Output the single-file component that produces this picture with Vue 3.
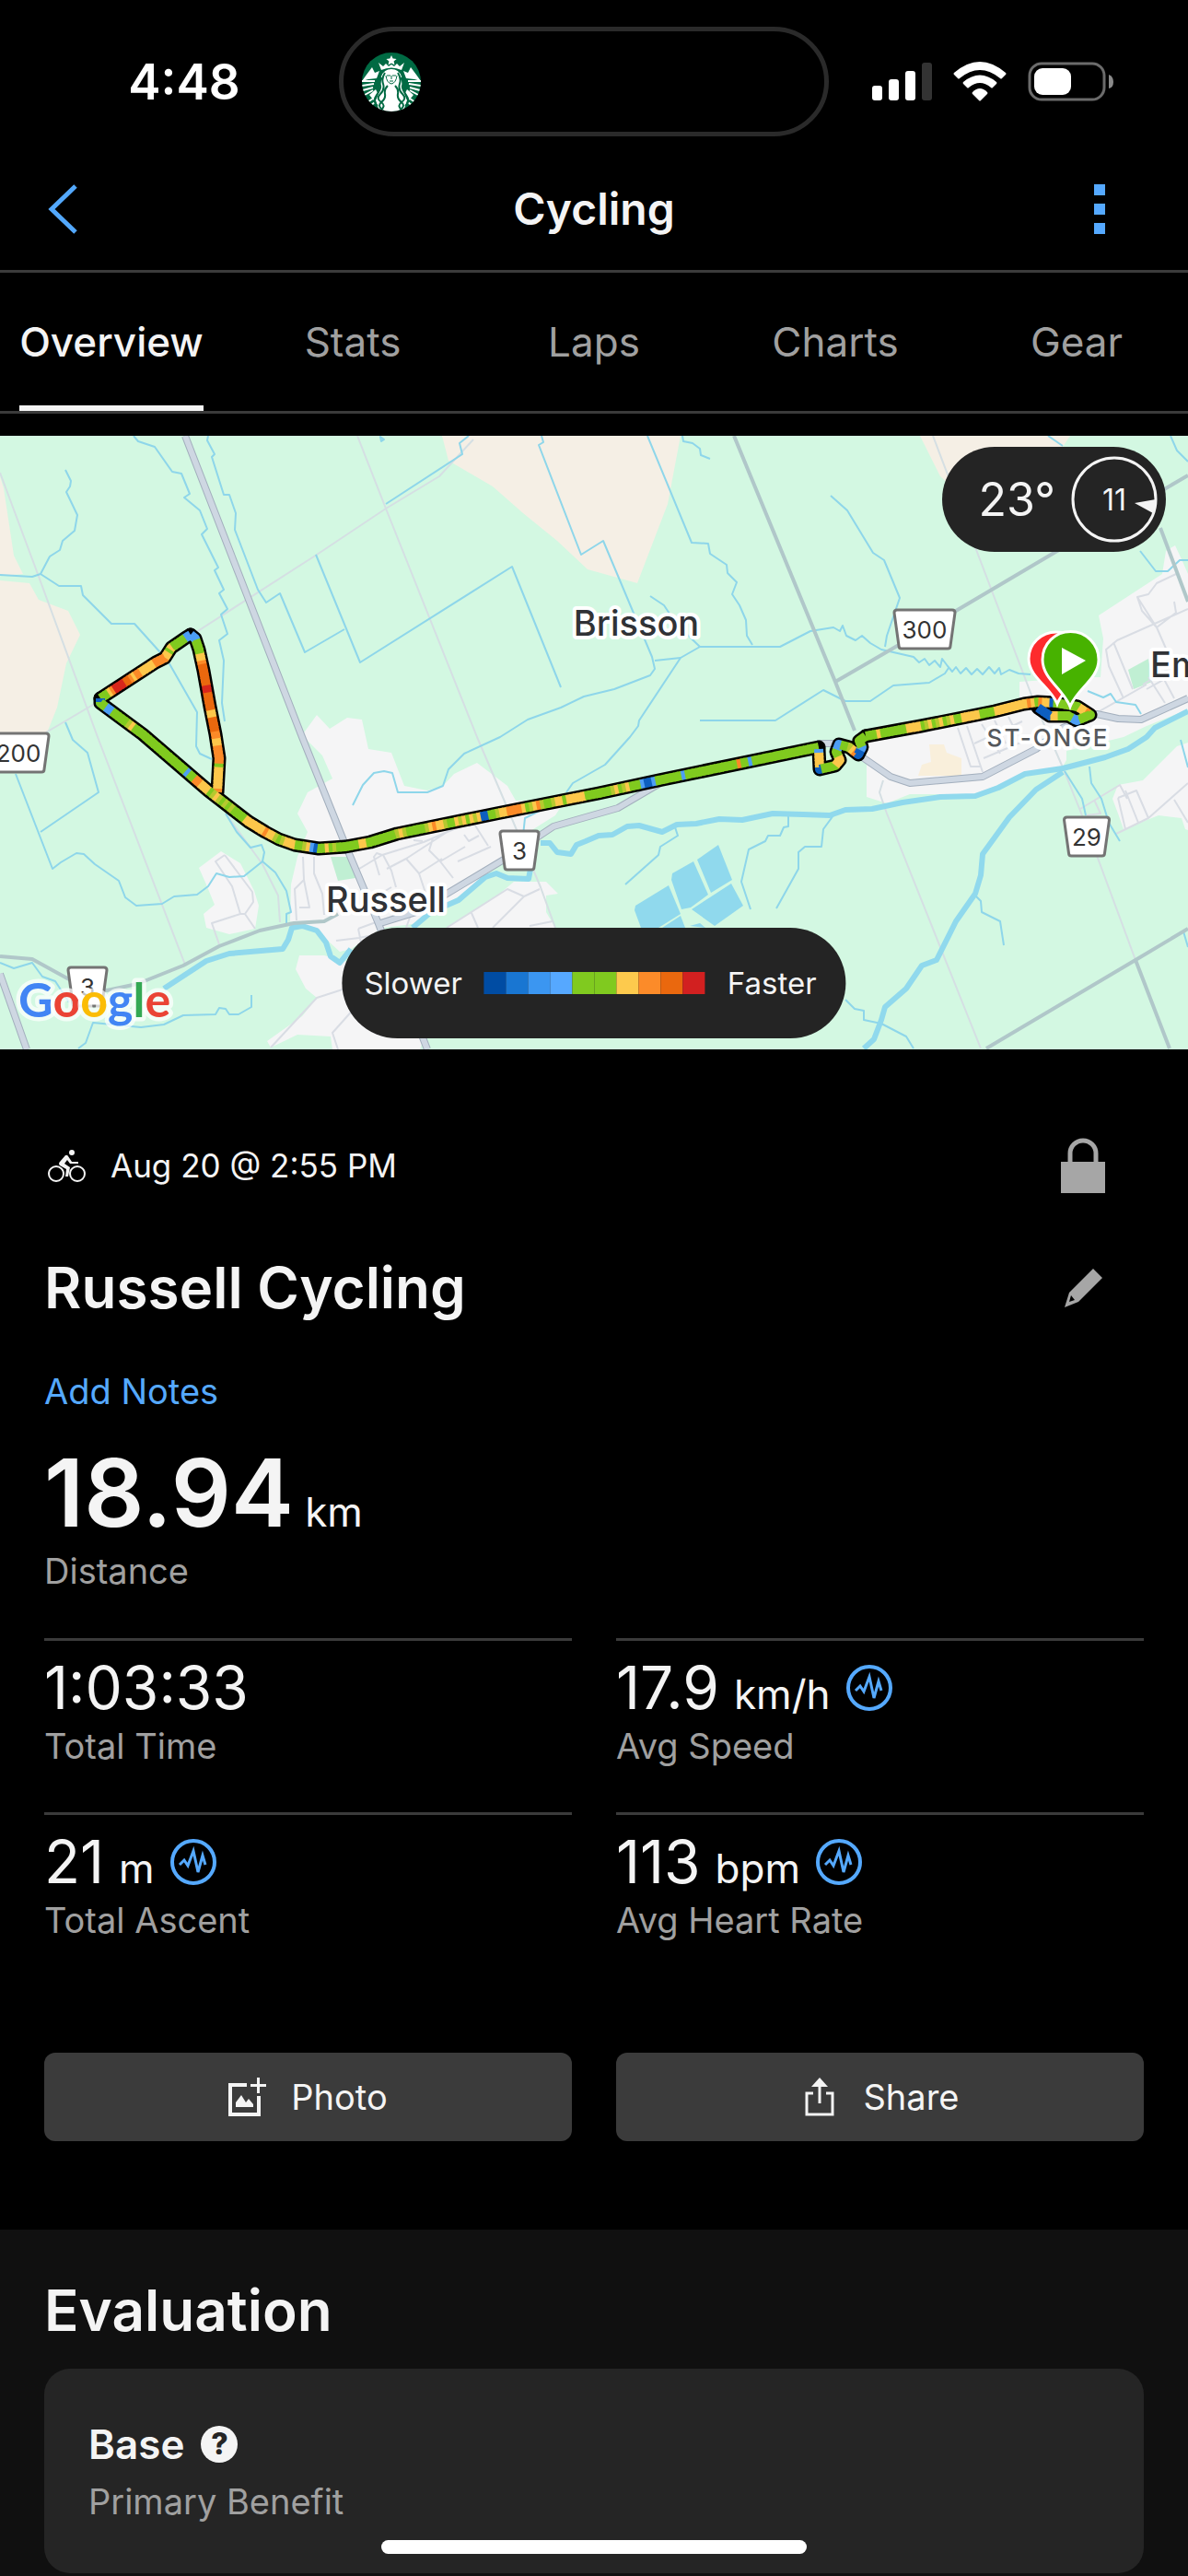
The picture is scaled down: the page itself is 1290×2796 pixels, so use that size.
<template>
  <div class="app">
    <div class="status-bar">
      <div class="clock">4:48</div>
      <div class="island">
        <svg class="siren" viewBox="0 0 64 64" aria-hidden="true">
          <clipPath id="disc"><circle cx="32" cy="32" r="32" /></clipPath>
          <g clip-path="url(#disc)">
            <rect width="64" height="64" fill="#006a43" />
            <g fill="#fff">
              <path d="M32 3l1.600 3.600 4 .4-3 2.600.9 3.900-3.500-2-3.500 2 .9-3.900-3-2.600 4-.4z" />
              <path d="M18 11l5 4 3-3 3 3 3-2 3 2 3-3 3 3 5-4-3 8q-11-5-22 0z" />
              <path d="M32 18q8 0 11 8 2 8 1 14l5 12-4 12H19l-4-12 5-12q-1-6 1-14 3-8 11-8z" />
              <path d="M11 16l3 6 5-2-3 8-9 1-7 2 5-7zM53 16l-3 6-5-2 3 8 9 1 7 2-5-7z" />
              <path d="M8 46l7-6 2 4-4 8zM56 46l-7-6-2 4 4 8z" />
            </g>
            <g fill="none" stroke="#fff" stroke-width="2">
              <path d="M0 31l14 0M0 36l13-2M1 41l11-3M3 46l9-5M64 31l-14 0M64 36l-13-2M63 41l-11-3M61 46l-9-5" />
              <path d="M6 54l6-4M9 58l5-4M58 54l-6-4M55 58l-5-4" />
            </g>
            <g fill="none" stroke="#006a43" stroke-width="2">
              <path d="M25 22q-4 6-2 12t-3 11 1 9-2 10M28 36q-4 4-3 9t-4 9 3 10M21 27q-2 6-1 9t-4 10 1 12" />
              <path d="M39 22q4 6 2 12t3 11-1 9 2 10M36 36q4 4 3 9t4 9-3 10M43 27q2 6 1 9t4 10-1 12" />
              <path d="M26 25q1 8 6 9 5-1 6-9" stroke-width="1" />
              <path d="M27 25h4M33 25h4M32 25v4M30 31h4" stroke-width="1" />
            </g>
          </g>
        </svg>
      </div>
      <div class="status-icons">
        <svg width="65" height="42" viewBox="0 0 65 42" aria-label="Signal">
          <rect x="0" y="25" width="11" height="16" rx="3" fill="#fff" />
          <rect x="18" y="18" width="11" height="23" rx="3" fill="#fff" />
          <rect x="36" y="9" width="11" height="32" rx="3" fill="#fff" />
          <rect x="54" y="0" width="11" height="41" rx="3" fill="#333" />
        </svg>
        <svg width="58" height="43" viewBox="0 0 58 43" fill="#fff" aria-label="Wi-Fi">
          <path d="M1 12Q29 -12 57 12Q58 13 57 14L53 18Q52 19 51 18Q29 0 7 18Q6 19 5 18L1 14Q0 13 1 12z" />
          <path d="M11 22Q29 7 47 22Q48 23 47 24L43 28Q42 29 41 28Q29 18 17 28Q16 29 15 28L11 24Q10 23 11 22z" />
          <path d="M21 33Q29 25 37 33Q38 34 37 35L30 42Q29 43 28 42L21 35Q20 34 21 33z" />
        </svg>
        <svg width="93" height="43" viewBox="0 0 93 43" aria-label="Battery">
          <rect x="2" y="2" width="81" height="39" rx="13" fill="none" stroke="#6b6b6b" stroke-width="3" />
          <rect x="7" y="7" width="40" height="29" rx="9" fill="#fff" />
          <path d="M88 14q5 2 5 8t-5 7z" fill="#8a8a8a" />
        </svg>
      </div>
    </div>

    <header class="header">
      <button class="icon-button" aria-label="Back">
        <svg width="32" height="54" viewBox="0 0 32 54" fill="none" stroke="#53a8fc" stroke-width="5">
          <path d="M30 2L4 27L30 52" />
        </svg>
      </button>
      <h1>Cycling</h1>
      <button class="icon-button menu" aria-label="More">
        <svg width="12" height="54" viewBox="0 0 12 54" fill="#55a9ff">
          <path d="M0 0h12v12H0zM0 21h12v12H0zM0 42h12v12H0z" />
        </svg>
      </button>
    </header>

    <nav class="tabs">
      <button v-for="tab in tabs" :key="tab" :class="{ active: tab === activeTab }" @click="activeTab = tab">
        <span>{{ tab }}</span>
      </button>
    </nav>

    <section class="map">
      <svg class="map-canvas" viewBox="0 0 1290 666">
        <rect width="1290" height="666" fill="#d3f8e2" />
        <path v-for="(d, i) in fields" :key="'f' + i" :d="d" fill="#f5efe5" />
        <path v-for="(d, i) in towns" :key="'t' + i" :d="d" fill="#f5f5f6" />
        <path v-for="(d, i) in parks" :key="'p' + i" :d="d" fill="#c0efd3" />
        <path d="M1009 335L1025 335 1028 344 1044 350 1044 369 997 369 1001 357 1011 354z" fill="#f9efdb" />
        <g fill="none" stroke-linejoin="round">
          <path v-for="(d, i) in lanes" :key="'l' + i" :d="d" stroke="#d5dfe3" stroke-width="2" />
          <path v-for="(d, i) in streets" :key="'s' + i" :d="d" stroke="#d9dde4" stroke-width="2" />
          <path v-for="(d, i) in streams" :key="'w' + i" :d="d" stroke="#8ed6ea" stroke-width="2" />
          <path v-for="(d, i) in rivers" :key="'r' + i" :d="d" stroke="#90d9ed" stroke-width="6" />
          <path v-for="(d, i) in roads" :key="'g' + i" :d="d" stroke="#b0c7c9" stroke-width="4" />
          <path v-for="(d, i) in highways" :key="'h' + i" :d="d" stroke="#a3afbd" stroke-width="8" />
          <path v-for="(d, i) in highways" :key="'i' + i" :d="d" stroke="#ced7e2" stroke-width="6" />
        </g>
        <path v-for="(d, i) in ponds" :key="'o' + i" :d="d" fill="#90d9ed" />

        <!-- ride track, coloured by speed -->
        <g fill="none" stroke-linejoin="round">
          <polyline v-for="(leg, i) in track" :key="'b' + i" :points="leg.points.join(' ')" stroke="#000" stroke-width="15" stroke-linecap="round" />
          <polyline v-for="(s, i) in segments" :key="'c' + i" :points="s.points" :stroke="s.color" stroke-width="10" />
        </g>

        <g v-for="s in shields" :key="s.label + s.x" :transform="`translate(${s.x} ${s.y})`">
          <path :d="shieldPath(s.w)" fill="#fff" stroke="#747474" stroke-width="3" stroke-linejoin="round" />
          <text class="shield-text" y="31">{{ s.label }}</text>
        </g>

        <text class="place" x="691" y="217">Brisson</text>
        <text class="place" x="419" y="517">Russell</text>
        <text class="place start" x="1249" y="262">Embrun</text>
        <text class="place small" x="1138" y="337">ST-ONGE</text>

        <g stroke="#fff" stroke-width="3">
          <path d="M1148 291C1141 273 1117 262 1117 242A30 29 0 0 1 1177 242C1177 262 1155 273 1148 291z" fill="#fd2b2d" />
          <path d="M1162 294C1155 275 1132 264 1132 243A30 30 0 0 1 1193 243C1193 264 1169 275 1162 294z" fill="#47b200" />
        </g>
        <path d="M1153 230V259L1179 244z" fill="#fff" />

        <text class="google" x="20" y="631">
          <tspan fill="#4285f4">G</tspan><tspan fill="#ea4335">o</tspan><tspan fill="#fbbc05">o</tspan><tspan fill="#4285f4">g</tspan><tspan fill="#34a853">l</tspan><tspan fill="#ea4335">e</tspan>
        </text>
      </svg>

      <div class="weather">
        <span class="temperature">23°</span>
        <div class="wind">
          <span>11</span>
          <svg width="96" height="96" viewBox="0 0 96 96" aria-hidden="true">
            <circle cx="48" cy="48" r="45" fill="none" stroke="#f4f4f4" stroke-width="3" />
            <path d="M70 52L93 48Q93 56 90 63z" fill="#f4f4f4" />
          </svg>
        </div>
      </div>

      <div class="legend">
        <span>Slower</span>
        <div class="scale">
          <i v-for="(c, i) in scale" :key="i" :style="{ background: c }"></i>
        </div>
        <span>Faster</span>
      </div>
    </section>

    <main class="summary">
      <div class="row">
        <svg class="bike" width="42" height="36" viewBox="0 0 42 36" aria-hidden="true">
          <g fill="none" stroke="#f4f4f4" stroke-width="2">
            <circle cx="9" cy="27" r="8" />
            <circle cx="32" cy="27" r="8" />
          </g>
          <circle cx="26" cy="4" r="3" fill="#f4f4f4" />
          <path d="M13 14L19 7q2-1 3 1L26 14H33v2H24L21 12 18 16 24 20 22 30H19L20 22 13 18q-2-2 0-4z" fill="#f4f4f4" />
        </svg>
        <time>Aug 20 @ 2:55 PM</time>
        <button class="icon-button end" aria-label="Privacy">
          <svg width="48" height="60" viewBox="0 0 48 60" fill="#a6a6a6">
            <path d="M0 26H48V60H0z" />
            <path d="M10 28V17a14 14 0 0 1 28 0V28" fill="none" stroke="#a6a6a6" stroke-width="5" />
          </svg>
        </button>
      </div>

      <div class="row title">
        <h2>Russell Cycling</h2>
        <button class="icon-button end" aria-label="Edit">
          <svg width="48" height="42" viewBox="-4 0 48 42" fill="#a6a6a6">
            <path fill-rule="evenodd" d="M31 0L41 10L15 36L0 42L5 26zM7 29L5 36L11 34z" />
          </svg>
        </button>
      </div>

      <a class="notes" href="#">Add Notes</a>

      <div class="distance"><strong>18.94</strong> km</div>
      <div class="label">Distance</div>

      <div class="stats">
        <div v-for="s in stats" :key="s.label" class="stat">
          <div class="value">
            <span>{{ s.value }}<small v-if="s.unit">{{ s.unit }}</small></span>
            <button v-if="s.unit" class="icon-button" :aria-label="s.label + ' chart'">
              <svg width="50" height="50" viewBox="0 0 50 50" fill="none" stroke="#55a9ff">
                <circle cx="25" cy="25" r="23" stroke-width="4" />
                <path d="M10 28L15 23L19 29L25 13L30 36L35 18L38 28" stroke-width="3" />
              </svg>
            </button>
          </div>
          <div class="label">{{ s.label }}</div>
        </div>
      </div>

      <div class="actions">
        <button>
          <svg width="42" height="42" viewBox="0 0 42 42" fill="#f4f4f4">
            <path d="M0 6H20V10H4V38H31V20H35V42H0z" />
            <path d="M31 0h3v7h7v3h-7v7h-3v-7h-7V7h7zM8 32V27L14 19L19 27L22 23L27 29V32z" />
          </svg>
          Photo
        </button>
        <button>
          <svg width="42" height="42" viewBox="0 0 42 42">
            <path d="M14 17H7V40H35V17H28M21 28V6" fill="none" stroke="#f4f4f4" stroke-width="3" />
            <path d="M21 0L30 10H12z" fill="#f4f4f4" />
          </svg>
          Share
        </button>
      </div>
    </main>

    <section class="evaluation">
      <h2>Evaluation</h2>
      <div class="card">
        <div class="benefit">
          Base
          <button class="help" aria-label="About primary benefit">?</button>
        </div>
        <div class="label">Primary Benefit</div>
      </div>
    </section>

    <div class="home-indicator"></div>
  </div>
</template>

<script setup>
import { ref } from "vue";

const tabs = ["Overview", "Stats", "Laps", "Charts", "Gear"];
const activeTab = ref("Overview");

const stats = [
  { value: "1:03:33", label: "Total Time" },
  { value: "17.9", unit: "km/h", label: "Avg Speed" },
  { value: "21", unit: "m", label: "Total Ascent" },
  { value: "113", unit: "bpm", label: "Avg Heart Rate" },
];

const scale = ["#004ca3", "#1976d2", "#3b96f1", "#56a8ff", "#80ca1f", "#80ca1f", "#fdca4d", "#fc8b29", "#ea680e", "#d22020"];

// Map geometry
const fields = [
  "M0 44L4 57 15 130 25 150 0 152zM0 157L32 160 42 178 74 190 87 216 72 247 62 295 50 325 0 330z",
  "M480 0L487 27 535 55 568 84 605 114 638 145 692 160 725 74 739 0z",
  "M999 0L1021 44 1060 80 1110 60 1154 12 1162 0z",
];

const towns = [
  "M328 325L344 303 358 318 377 306 393 308 400 340 425 344 439 380 464 385 481 380 493 367 518 355 551 380 560 396 614 395 603 412 568 434 531 474 498 500 448 530 415 534 381 557 369 560 344 537 315 527 316 487 323 457 334 430 323 410 334 387 361 372 350 347z",
  "M240 451L261 464 276 494 281 510 277 535 249 541 224 534 221 519 233 509 224 487 216 469z",
  "M325 564L352 564 480 600 456 666 361 666 359 652 323 650 294 664 290 657 328 630 344 610 332 600 321 579z",
  "M558 484L593 484 606 497 593 499 593 517 603 534 485 534 539 500z",
  "M1276 119L1283 134 1290 150V297L1245 315 1220 327 1158 342 1158 352 1154 359 1096 374 1059 389 988 389 963 399 941 392 941 328 1107 290 1107 267 1179 262 1195 262 1198 220 1193 195 1262 150 1266 125z",
  "M1214 379L1241 374 1278 337 1290 333V428L1287 427 1283 415 1258 412 1220 427 1214 410 1208 394z",
];

const parks = ["M359 457L379 457 386 480 367 483z", "M1225 254L1247 242 1251 267 1231 275z"];

const ponds = [
  "M780 444L795 482 772 496 757 460z",
  "M753 462L769 498 750 512 740 514 729 482 730 475z",
  "M726 488L739 519 715 534 696 534 689 515 690 510z",
  "M794 486L807 510 776 532 751 514z",
  "M739 521L744 534 719 534z",
  "M760 529L749 532 766 534z",
];

const lanes = [
  "M0 40L41 150 106 327 201 574",
  "M388 0L419 79 518 327 551 404 587 490 603 534",
  "M50 322L106 289 207 217 344 129 419 79 477 44 514 4",
  "M1013 0L1121 284 1154 360 1173 407 1233 569",
  "M959 374L955 387 963 410 1065 665",
  "M245 410L285 465 302 499 304 528",
];

const streets = [
  "M244 455L234 462 252 489 261 519 266 519 275 506 274 495 244 455M261 519L230 529 238 552M266 519L277 535",
  "M329 457L330 482 320 492 322 526M341 457V475L350 497 352 520M330 482L336 512 325 512",
  "M390 470L415 455 409 453 406 457 412 477M415 455L460 441 488 429 520 416M420 470L441 459 487 429M430 490L425 472 416 455M470 437L466 450 478 462 492 480M449 439L459 440M497 462L533 446M504 433L509 440 520 434M516 423L530 445M478 462L505 446M425 490L400 505M441 459L455 475 480 459M455 475L462 496",
  "M389 535L430 520M365 548L390 545 445 534M389 535L392 550M446 520L441 534",
  "M485 534L551 492 569 500 586 492M551 492L569 500 535 534M512 518L519 534M575 532L600 527",
  "M294 664L344 610 375 600M395 610L361 648 367 666M395 610L440 650",
  "M1277 150L1256 160 1247 172 1235 175 1240 190 1256 208 1277 192 1275 180M1256 208L1270 240M1290 188L1213 222 1201 232 1204 250 1220 285M1209 224L1230 275M1235 175L1256 208M1245 275L1290 250M1241 270L1290 240M1247 262L1265 290M1259 255L1275 285M1192 300L1245 270",
  "M1040 317L1054 359 1064 359M1050 315L1067 365M1066 313L1086 345M1080 309L1092 334M1095 305L1105 325M1058 334L1110 310M1068 350L1120 328",
  "M1214 393L1234 385 1247 415M1214 393L1222 427M1222 385L1236 420M1173 405L1216 379 1224 394M1212 432L1247 415 1290 377M1188 395L1195 410 1180 412M1275 395L1290 420",
];

const streams = [
  "M145 0L150 6 168 12 187 39 197 41 206 63 200 67 217 81 225 101 219 107 237 143 233 146 243 167 238 171 247 188 240 194 247 215 238 222 243 244 241 290 244 310",
  "M226 0L225 5 233 20 230 23 243 64 249 64 256 84 255 102 280 167 289 181 304 171 331 235 374 210",
  "M343 129L391 246 556 142 609 273",
  "M71 37L77 49 76 55 72 61 84 86 81 103 68 114 65 124 54 131 44 150 64 163 88 163 90 173 121 204 146 204 182 244 214 300 213 337 217 345 230 351",
  "M0 151L35 153 44 150M71 311L79 330 95 344 107 387 44 430",
  "M509 0L499 8 502 20 419 74M413 1L417 4 414 6z",
  "M588 0L590 7 585 10 631 129 655 114 708 240 711 253 706 260 667 275 634 283 609 295 573 308 543 327 504 345 487 362 481 380 464 387 432 387 426 366 417 364 406 366 394 379 383 401",
  "M711 244L739 241 760 229 847 229 880 212 905 208 912 212 915 206 919 217 929 222 936 217 945 225 957 232 992 240 998 246 1004 242 1009 249 1015 244 1021 251 1023 242 1029 250 1034 256 1038 251 1043 258 1049 252 1055 259 1061 253 1067 259 1074 251 1080 258 1085 252 1087 259 1096 254 1106 258 1119 259",
  "M739 241L694 309 693 315 684 327 657 357 622 377 615 387",
  "M706 174L721 184 735 205 760 229",
  "M703 0L751 116 769 117 771 128 789 140 790 149 800 159 795 172 803 184 810 200 811 217 817 227",
  "M741 0L742 6 752 8 760 14 761 21 771 25",
  "M902 65L920 81 948 127 960 135 977 176 963 217 961 229",
  "M760 309H842L894 276 918 288H945L970 271 1009 268 1026 258 1030 252",
  "M1138 0L1154 11M1271 0L1278 16 1290 28M1238 125L1255 147H1268L1281 135H1290",
  "M1181 277L1198 284 1206 280 1212 289 1233 292 1239 302",
  "M17 367L57 470 66 463 83 453 91 454 103 465 129 483 136 501 148 510 176 508 189 500 214 498 226 489 235 475 249 479 265 478 285 462 299 474 311 494 316 517 311 519 311 532",
  "M245 410L257 430 272 447 284 444 287 452 285 462",
  "M1059 499L1065 505 1066 517 1086 527 1090 553",
  "M918 612L928 622 938 624V634L957 638 984 652 992 665",
  "M1156 364L1175 394 1179 412M1183 359L1185 377 1196 394 1204 420 1216 440",
  "M856 412V424L851 425 847 434H834L831 440 813 449 805 484 815 514",
  "M905 412L894 427 892 446H874L867 452V470L843 513",
  "M733 425L736 434 717 446 715 455 679 487",
  "M85 665L93 659 101 637 153 642 178 639 199 629 234 628 238 621 245 622 249 628H259L273 620V607",
  "M0 572L15 578 35 572 46 587 60 592 75 615",
  "M568 434L570 415 590 405M1285 538L1290 555M1282 330L1290 360",
];

const rivers = [
  "M178 600L224 570 249 562 307 557 313 547 317 534 328 532 344 537 354 550 359 565 369 572 381 557M448 534L468 517 498 504 527 479 539 475 551 480 574 481 576 470M587 442L597 442 605 452 620 454 626 444 636 440 650 434 665 433 681 424 694 423 719 430 735 422 756 421 781 416 806 417 839 410 872 411 901 412 918 406 947 405 980 398 1021 392 1059 391 1084 382 1113 367 1154 361 1200 349 1225 340 1245 327 1254 317 1290 299",
  "M1154 365L1125 384 1096 414 1067 454 1065 477 1059 497 1038 527 1017 569 1001 575 984 600 961 620 957 634 949 655 938 665",
];

const roads = [
  "M797 0L907 267 928 320",
  "M907 267L976 227 1038 190 1148 125 1266 57 1290 43",
  "M1260 100L1290 180",
  "M1071 665L1233 569 1290 535M1233 569L1270 665",
  "M0 565L35 568 75 590 116 602 149 595 199 575 238 554 282 537 319 529 352 527 367 519",
];

const highways = [
  "M201 0L328 327 375 444 410 527 464 666",
  "M0 584L29 666",
  "M410 530L452 517 547 460 601 424 650 410 671 404 717 377",
  "M887 334H905L938 350 967 370 988 377 1067 370 1125 340 1154 317 1191 302 1214 307 1239 308 1290 285",
];

const shields = [
  { label: "300", x: 1004, y: 189, w: 66 },
  { label: "3", x: 564, y: 429, w: 42 },
  { label: "3", x: 95, y: 577, w: 42 },
  { label: "200", x: 20, y: 323, w: 66 },
  { label: "29", x: 1180, y: 414, w: 49 },
];

function shieldPath(w) {
  const top = w / 2;
  const bottom = w / 2 - 5;
  return `M${-top + 3} 0H${top - 3}Q${top} 0 ${top} 3L${bottom} 39Q${bottom} 42 ${bottom - 3} 42H${-bottom + 3}Q${-bottom} 42 ${-bottom} 39L${-top} 3Q${-top} 0 ${-top + 3} 0z`;
}

// Each leg of the track is cut into equal pieces, one per letter of `speeds`
const speedColors = {
  n: "#0d5fc0",
  b: "#4d9ef5",
  g: "#80ca1f",
  l: "#b5c92f",
  y: "#fdc74b",
  o: "#fb8a28",
  d: "#ea680e",
  r: "#d8261c",
};

const track = [
  {
    points: [[236, 387], [238, 350], [234, 324], [228, 294], [221, 255], [216, 232], [212, 220], [207, 216]],
    speeds: "oyyyyyygoooooyyooddddyydddddrrddddddoyyggggbb",
  },
  {
    points: [[207, 216], [202, 219], [186, 230], [179, 241], [169, 246], [109, 285]],
    speeds: "bbgggggygyyooooyyyyyooyoddrrrroyggg",
  },
  {
    points: [[109, 285], [109, 290], [155, 324], [226, 385], [257, 409], [270, 419], [288, 430], [303, 438], [320, 444], [346, 448], [375, 446], [402, 441], [431, 432], [539, 410], [650, 388], [715, 374], [889, 338]],
    speeds:
      "nggbbggggglyggggggggggggggggggbggooyyyglylglglggggyyyyyyoyylglyyygglybnggyglggggggyygggggggglylggggglyoyylggylygylynngglyyooooyglyolgglyygyyyyyggggggglyglygggbnnbgggggggbggggggggggggggoggbgggggggggggggggggg",
  },
  {
    points: [[889, 340], [890, 362], [907, 358], [912, 352], [908, 343], [911, 335], [922, 338], [932, 346], [936, 338], [933, 331], [940, 326]],
    speeds: "byyyynggggyyyggbbgglyonnbgggg",
  },
  {
    points: [[940, 326], [1000, 315], [1080, 299], [1112, 291], [1127, 289], [1147, 290], [1170, 294], [1184, 303], [1169, 309], [1160, 304], [1140, 304], [1127, 295]],
    speeds: "gggygggggggyyyyglyglyglyggyyyyyggggyyyyyyyyyoygoyyngggggggyyoggggbbggggyynnnn",
  },
];

// Piece of a polyline between two distances along it
function slice(points, from, to) {
  const out = [];
  let done = 0;
  for (let i = 1; i < points.length; i++) {
    const [x1, y1] = points[i - 1];
    const [x2, y2] = points[i];
    const len = Math.hypot(x2 - x1, y2 - y1);
    const a = Math.max(from - done, 0) / len;
    const b = Math.min(to - done, len) / len;
    if (a < 1 && b > 0) {
      out.push([x1 + (x2 - x1) * a, y1 + (y2 - y1) * a], [x1 + (x2 - x1) * b, y1 + (y2 - y1) * b]);
    }
    done += len;
  }
  return out.map((p) => p.join(",")).join(" ");
}

const segments = track.flatMap(({ points, speeds }) => {
  let total = 0;
  for (let i = 1; i < points.length; i++) {
    total += Math.hypot(points[i][0] - points[i - 1][0], points[i][1] - points[i - 1][1]);
  }
  const step = total / speeds.length;
  return [...speeds].map((s, i) => ({
    color: speedColors[s],
    points: slice(points, i * step, (i + 1) * step + 1),
  }));
});
</script>

<style>
body {
  margin: 0;
  background: #101010;
}
</style>

<style scoped>
.app {
  background: #000;
  color: #f4f4f4;
  font-family: Inter, "Liberation Sans", sans-serif;
  overflow: hidden;
}
h1,
h2 {
  margin: 0;
  font-weight: 600;
}
button {
  font: inherit;
  color: inherit;
  background: none;
  border: 0;
  padding: 0;
}
svg {
  display: block;
}

.status-bar {
  display: grid;
  grid-template-columns: 368fr 532fr 390fr;
  align-items: center;
  padding: 29px 0 16px;
}
.clock {
  padding-left: 32px;
  text-align: center;
  font-size: 53px;
  font-weight: 600;
  line-height: 64px;
  color: #fff;
}
.island {
  box-sizing: border-box;
  height: 119px;
  display: flex;
  align-items: center;
  padding-left: 20px;
  border: 5px solid #2a2a2a;
  border-radius: 60px;
}
.siren {
  width: 64px;
}
.status-icons {
  display: flex;
  align-items: center;
  gap: 23px;
  padding-left: 47px;
}

.header {
  display: grid;
  grid-template-columns: 1fr auto 1fr;
  align-items: center;
  height: 132px;
  box-sizing: border-box;
  padding: 0 90px 4px 52px;
  border-bottom: 3px solid #3b3b3b;
}
.header .icon-button {
  width: 32px;
}
.header .menu {
  width: 12px;
  justify-self: end;
}
h1 {
  padding-left: 38px;
  font-size: 48px;
  line-height: 60px;
}

.tabs {
  display: flex;
  margin: 0 -10px;
  border-bottom: 3px solid #3b3b3b;
}
.tabs button {
  flex: 1;
  height: 150px;
  display: flex;
  justify-content: center;
  font-size: 44px;
  color: #a0a0a0;
}
.tabs span {
  box-sizing: border-box;
  height: 150px;
  line-height: 150px;
}
.tabs .active {
  color: #f4f4f4;
  font-weight: 500;
}
.tabs .active span {
  border-bottom: 6px solid #f4f4f4;
}

.map {
  position: relative;
  margin-top: 24px;
}
.map-canvas {
  width: 100%;
  height: auto;
}
.place {
  font-size: 38px;
  font-weight: 500;
  fill: #303236;
  stroke: #fff;
  stroke-width: 8px;
  stroke-linejoin: round;
  paint-order: stroke;
  text-anchor: middle;
}
.place.start {
  text-anchor: start;
}
.place.small {
  font-size: 26px;
  fill: #55585c;
  letter-spacing: 2px;
}
.shield-text {
  font-size: 26px;
  fill: #333;
  text-anchor: middle;
}
.google {
  font-family: Lato, "Liberation Sans", sans-serif;
  font-size: 52px;
  font-weight: 700;
  stroke: rgba(255, 255, 255, 0.7);
  stroke-width: 9px;
  stroke-linejoin: round;
  paint-order: stroke;
}
.weather {
  position: absolute;
  top: 12px;
  right: 24px;
  display: flex;
  align-items: center;
  gap: 16px;
  padding: 9px 8px 9px 40px;
  background: #242424;
  border-radius: 57px;
}
.temperature {
  font-size: 50px;
}
.wind {
  display: grid;
  place-items: center;
}
.wind > * {
  grid-area: 1 / 1;
}
.wind span {
  font-size: 32px;
}
.legend {
  position: absolute;
  bottom: 12px;
  left: 50%;
  transform: translateX(-50%);
  display: flex;
  align-items: center;
  gap: 24px;
  height: 120px;
  padding: 0 32px 0 24px;
  background: #242424;
  border-radius: 60px;
  font-size: 33px;
}
.scale {
  display: flex;
}
.scale i {
  width: 24px;
  height: 24px;
}

.summary {
  padding: 80px 48px 96px;
}
.row {
  display: flex;
  align-items: center;
  height: 92px;
  padding: 0 42px 0 4px;
}
.row time {
  margin-left: 26px;
  font-size: 35px;
}
.row .end {
  margin-left: auto;
}
.title {
  margin-top: 41px;
  padding-left: 0;
}
h2 {
  font-size: 62px;
  line-height: 80px;
}
.notes {
  display: block;
  margin-top: 42px;
  font-size: 38px;
  line-height: 48px;
  color: #55a9ff;
  text-decoration: none;
}
.distance {
  margin-top: 46px;
  font-size: 44px;
  line-height: 80px;
}
.distance strong {
  font-size: 102px;
  font-weight: 600;
}
.label {
  font-size: 38px;
  line-height: 48px;
  color: #a0a0a0;
}
.stats {
  display: grid;
  grid-template-columns: 1fr 1fr;
  column-gap: 48px;
  margin-top: 49px;
}
.stat {
  height: 186px;
  border-top: 3px solid #3b3b3b;
}
.value {
  display: flex;
  align-items: center;
  gap: 17px;
  height: 78px;
  padding-top: 12px;
  font-size: 64px;
  line-height: 78px;
}
.value small {
  margin-left: 16px;
  font-size: 44px;
  line-height: 44px;
}
.actions {
  display: grid;
  grid-template-columns: 1fr 1fr;
  gap: 48px;
  margin-top: 72px;
}
.actions button {
  display: flex;
  align-items: center;
  justify-content: center;
  gap: 26px;
  height: 96px;
  background: #3b3b3b;
  border-radius: 12px;
  font-size: 38px;
}

.evaluation {
  padding: 48px 48px 3px;
  background: #101010;
}
.card {
  margin-top: 23px;
  padding: 56px 48px 54px;
  background: #252525;
  border-radius: 28px;
}
.benefit {
  display: flex;
  align-items: center;
  gap: 18px;
  font-size: 44px;
  font-weight: 600;
  line-height: 52px;
}
.card .label {
  margin-top: 12px;
}
.help {
  width: 40px;
  height: 40px;
  border-radius: 50%;
  background: #f4f4f4;
  color: #252525;
  font-size: 32px;
  font-weight: 800;
  line-height: 40px;
}
.home-indicator {
  position: fixed;
  bottom: 24px;
  left: 50%;
  width: 462px;
  height: 15px;
  transform: translateX(-50%);
  background: #fff;
  border-radius: 8px;
}
</style>
